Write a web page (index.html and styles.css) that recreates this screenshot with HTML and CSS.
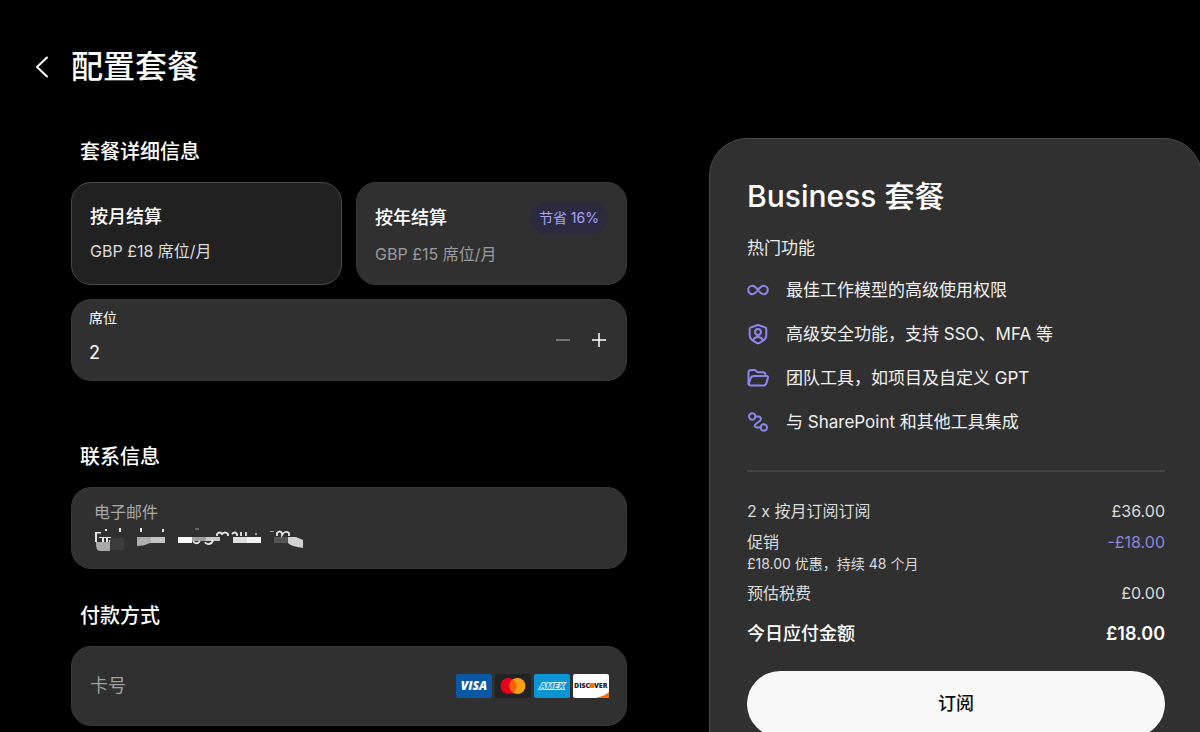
FILE: index.html
```
<!DOCTYPE html>
<html lang="zh-CN">
  <head>
    <meta charset="utf-8">
    <meta name="viewport" content="width=device-width, initial-scale=1">
    <title>配置套餐</title>
    <link rel="stylesheet" href="styles.css">
  </head>
  <body>
    <header class="page-header">
      <button type="button" class="back-btn" aria-label="返回">
        <svg width="14" height="22" viewBox="0 0 14 22"><path d="M12 1.500 2 11l10 9.500"/></svg>
      </button>
      <h1 class="page-title">配置套餐</h1>
    </header>
    <form class="checkout">
      <main class="config">
        <section class="section">
          <h2 class="section-title">套餐详细信息</h2>
          <div class="plans">
            <label class="plan">
              <input type="radio" name="plan" value="monthly" checked>
              <span class="plan-head"><span class="plan-name">按月结算</span></span>
              <span class="plan-price">GBP £18 席位/月</span>
            </label>
            <label class="plan">
              <input type="radio" name="plan" value="yearly">
              <span class="plan-head">
                <span class="plan-name">按年结算</span>
                <span class="badge">节省 16%</span>
              </span>
              <span class="plan-price">GBP £15 席位/月</span>
            </label>
          </div>
          <div class="field seats">
            <div class="seats-value">
              <label for="seats">席位</label>
              <input id="seats" type="text" inputmode="numeric" value="2">
            </div>
            <button type="button" class="step-btn" aria-label="减少席位" disabled>
              <svg width="14" height="14" viewBox="0 0 14 14"><path d="M0 7h14"/></svg>
            </button>
            <button type="button" class="step-btn" aria-label="增加席位">
              <svg width="14" height="14" viewBox="0 0 14 14"><path d="M0 7h14M7 0v14"/></svg>
            </button>
          </div>
        </section>

        <section class="section section-contact">
          <h2 class="section-title">联系信息</h2>
          <div class="field email">
            <label for="email">电子邮件</label>
            <input id="email" type="email">
            <!-- masked address -->
            <svg class="mask" width="210" height="26" viewBox="0 0 210 26" aria-hidden="true">
              <g fill="#e8e8e8">
                <path d="M1 5h2v10H1zM3 5h4v1.500H3z"/>
                <path d="M11 2h2v2h-2zM25 1h2v4h-2zM46 1h2v4h-2zM68 2h2v3h-2z"/>
                <path d="M5 10h12v1H5zM8 11h2v4H8zM12 11h2v4h-2zM15 13h3v2h-3z"/>
                <path d="M161 6h2v2h-2zM176 4h4v1h-4zM101 1.500h4v1h-4z" opacity=".6"/>
              </g>
              <path fill="#a9a9a9" d="M2 15h14v9H6c-3 0-4-2-4-9z"/>
              <path fill="#3b3c3e" d="M16 11h14v12H16z"/>
              <path fill="#aeaeae" d="M43 10h14v6c-4 0-4 3-14 3z"/>
              <path fill="#c5c5c5" d="M57 10h14v6H57z"/>
              <path fill="#fafafa" d="M84 10h14v6H84z"/>
              <path fill="#a0a0a0" d="M98 10h14v4H98z"/>
              <path fill="#c8c8c8" d="M112 10h14v4h-14z"/>
              <path fill="#dedede" d="M139 10h14v6h-14z"/>
              <path fill="#f2f2f2" d="M153 10h14v6h-14z"/>
              <path fill="#555" d="M180 10h14v6h-14z"/>
              <path fill="#d2d2d2" d="M194 10h8l7 3v8c-6-1-12-2-15-5z"/>
              <g fill="none" stroke="#e8e8e8" stroke-width="1.800">
                <path d="M123 9V7q3-3 5 0 3-3 6 0v2M138 7q3-3 5 0v2M147 5v4M152 5v4M183 9V6q3-3 5 0v2q3-5 7-2v3"/>
                <path d="M99 14c2 3 5 3 7 0M111 15c1 3 7 3 8-2"/>
              </g>
            </svg>
          </div>
        </section>

        <section class="section">
          <h2 class="section-title">付款方式</h2>
          <div class="field card-number">
            <input type="text" inputmode="numeric" placeholder="卡号" aria-label="卡号">
            <div class="brands">
              <svg width="36" height="24" viewBox="0 0 36 24" role="img" aria-label="Visa">
                <rect width="36" height="24" rx="2" fill="#0a58a4"/>
                <text x="18" y="16" text-anchor="middle" class="visa">VISA</text>
              </svg>
              <svg width="36" height="24" viewBox="0 0 36 24" role="img" aria-label="Mastercard">
                <rect width="36" height="24" rx="2" fill="#232323"/>
                <circle cx="13.500" cy="12" r="8" fill="#eb001b"/>
                <circle cx="22.500" cy="12" r="8" fill="#f79e1b"/>
                <path d="M18 5.400a8 8 0 0 1 0 13.200 8 8 0 0 1 0-13.200z" fill="#ff5f00"/>
              </svg>
              <svg width="36" height="24" viewBox="0 0 36 24" role="img" aria-label="Amex">
                <rect width="36" height="24" rx="2" fill="#0c95d3"/>
                <text x="18" y="15" text-anchor="middle" class="amex">AMEX</text>
              </svg>
              <svg width="36" height="24" viewBox="0 0 36 24" role="img" aria-label="Discover">
                <rect width="36" height="24" rx="2" fill="#fff"/>
                <path d="M22 24c6-1 11-3 14-6v4a2 2 0 0 1-2 2z" fill="#f76b0c"/>
                <text x="1" y="14" class="discover">DISC</text>
                <text x="21" y="14" class="discover">VER</text>
                <circle cx="19" cy="11.500" r="2.600" fill="#f76b0c"/>
              </svg>
            </div>
          </div>
        </section>
      </main>

      <aside class="summary">
        <h2 class="summary-title">Business 套餐</h2>
        <h3 class="summary-subtitle">热门功能</h3>
        <ul class="features">
          <li>
            <svg class="icon" width="22" height="22" viewBox="0 0 22 22"><path d="M11 11c-2-2.600-3.400-4.200-5.600-4.200a4.200 4.200 0 0 0 0 8.400C7.600 15.200 9 13.600 11 11s3.400-4.200 5.600-4.200a4.200 4.200 0 0 1 0 8.400C14.400 15.200 13 13.600 11 11z"/></svg>
            最佳工作模型的高级使用权限
          </li>
          <li>
            <svg class="icon" width="22" height="22" viewBox="0 0 22 22"><path d="M10 2.200q1-.4 2 0l6 2.200q1.300.5 1.300 1.900v6.200c0 3.500-2.400 5-6.800 7.300q-1.500.8-3 0C5.100 17.500 2.700 16 2.700 12.500V6.300q0-1.400 1.300-1.900z"/><circle cx="11" cy="9" r="2.900"/><path d="M6.500 17c1-4 8-4 9 0"/></svg>
            高级安全功能，支持 SSO、MFA 等
          </li>
          <li>
            <svg class="icon" width="22" height="22" viewBox="0 0 22 22"><path d="M1.500 17V5.500Q1.500 3 4 3h3.200q1 0 1.700.7l.9.900q.6.600 1.600.6h4.500Q18.500 5.200 18.500 8v1"/><path d="M7 9h12.500q2 0 1.400 1.900l-1.500 5.200q-.7 2.400-3 2.400H4q-2.600 0-1.900-2.500l1.500-4.700Q4.300 9 7 9z"/></svg>
            团队工具，如项目及自定义 GPT
          </li>
          <li>
            <svg class="icon" width="22" height="22" viewBox="0 0 22 22"><circle cx="5.200" cy="5.500" r="3.200"/><circle cx="16.800" cy="16.500" r="3.200"/><path d="M8.400 5.500h2.800c3 0 3.500 3 1.600 4.500l-4 3C7 14.500 7.500 16.500 10 16.500h3.600"/></svg>
            与 SharePoint 和其他工具集成
          </li>
        </ul>
        <dl class="bill">
          <div class="bill-row">
            <dt>2 x 按月订阅订阅</dt>
            <dd>£36.00</dd>
          </div>
          <div class="bill-row">
            <dt>促销<small>£18.00 优惠，持续 48 个月</small></dt>
            <dd class="discount">-£18.00</dd>
          </div>
          <div class="bill-row">
            <dt>预估税费</dt>
            <dd>£0.00</dd>
          </div>
          <div class="bill-row total">
            <dt>今日应付金额</dt>
            <dd>£18.00</dd>
          </div>
        </dl>
        <button type="submit" class="subscribe-btn">订阅</button>
      </aside>
    </form>
  </body>
</html>
```
FILE: styles.css
```
* {
  box-sizing: border-box;
}
body {
  margin: 0;
  height: 100vh;
  overflow: hidden;
  background: #000;
  color: #fff;
  font-family: Inter, "Noto Sans CJK SC", sans-serif;
  font-size: 16px;
  line-height: 24px;
}
h1, h2, h3, ul, dl, dd {
  margin: 0;
  padding: 0;
}
button, input {
  font: inherit;
  color: inherit;
  background: none;
  border: 0;
  padding: 0;
}
button {
  cursor: pointer;
}
svg {
  display: block;
}

/* Header */
.page-header {
  display: flex;
  align-items: center;
  gap: 22px;
  padding: 46px 35px 50px;
}
.back-btn path {
  fill: none;
  stroke: #fff;
  stroke-width: 2;
  stroke-linecap: round;
  stroke-linejoin: round;
}
.page-title {
  font-size: 32px;
  line-height: 42px;
  font-weight: 500;
}

/* Two columns, the summary runs just past the right edge */
.checkout {
  display: grid;
  grid-template-columns: 556fr 493fr;
  gap: 82px;
  align-items: start;
  margin: -1px -2px 0 71px;
}
.section {
  margin-bottom: 32px;
}
.section-title {
  padding-left: 9px;
  margin-bottom: 15px;
  font-size: 20px;
  line-height: 30px;
  font-weight: 500;
}
.section-contact {
  margin-top: 61px;
}

/* Plans */
.plans {
  display: grid;
  grid-template-columns: 1fr 1fr;
  gap: 14px;
  margin-bottom: 14px;
}
.plan {
  position: relative;
  display: flex;
  flex-direction: column;
  justify-content: center;
  gap: 8px;
  min-height: 103px;
  padding: 0 18px;
  border: 1px solid #383838;
  border-radius: 20px;
  background: #303030;
  cursor: pointer;
}
.plan:has(input:checked) {
  background: #212121;
  border-color: #4a4a4a;
  gap: 10px;
}
.plan input {
  position: absolute;
  opacity: 0;
}
.plan-head {
  display: flex;
  align-items: center;
  justify-content: space-between;
}
.plan-name {
  font-size: 18px;
  font-weight: 500;
}
.plan-price {
  color: #9b9b9b;
}
.plan input:checked ~ .plan-price {
  color: #dcdcdc;
}
.badge {
  padding: 0 9px;
  border-radius: 16px;
  background: #2d2a40;
  color: #a5a5fa;
  font-size: 14px;
  line-height: 32px;
}

/* Fields */
.field {
  border: 1px solid #383838;
  border-radius: 20px;
  background: #303030;
}
.field input {
  display: block;
  width: 100%;
  outline: 0;
}
.seats {
  display: flex;
  align-items: center;
  padding: 8px 9px 15px 17px;
}
.seats-value {
  flex: 1;
}
.seats-value label {
  display: block;
  margin-bottom: 13px;
  font-size: 14px;
  line-height: 20px;
}
.seats-value input {
  height: 24px;
  font-size: 18px;
}
.step-btn {
  display: grid;
  place-items: center;
  width: 36px;
  height: 36px;
  margin-top: 7px;
}
.step-btn path {
  stroke: #fff;
  stroke-width: 1.5;
}
.step-btn:disabled path {
  stroke: #8a8a8a;
}
.email {
  position: relative;
  min-height: 82px;
  padding: 12px 22px 16px;
}
.email label {
  display: block;
  color: #a8a8a8;
}
.email input {
  height: 26px;
}
.mask {
  position: absolute;
  left: 22px;
  top: 39px;
}
.card-number {
  display: flex;
  align-items: center;
  min-height: 80px;
  padding: 0 17px 0 18px;
}
.card-number input {
  flex: 1;
  min-width: 0;
  font-size: 18px;
}
.card-number input::placeholder {
  color: #a0a0a0;
}
.brands {
  display: flex;
  gap: 3px;
}
.visa {
  fill: #fff;
  font: italic 800 12px "Open Sans", sans-serif;
}
.amex {
  fill: #0c95d3;
  stroke: #d5edf8;
  stroke-width: 2;
  paint-order: stroke;
  font: italic 700 9px "Open Sans", sans-serif;
}
.discover {
  fill: #222;
  font: 800 7px "Open Sans", sans-serif;
}

/* Summary */
.summary {
  margin-top: 1px;
  padding: 37px 36px 36px 37px;
  border: 1px solid #4a4a4a;
  border-radius: 38px;
  background: #303030;
}
.summary-title {
  margin-bottom: 20px;
  font-size: 30px;
  line-height: 40px;
  font-weight: 500;
}
.summary-subtitle {
  margin-bottom: 18px;
  color: #ececec;
  font-size: 17px;
  font-weight: 400;
}
.features {
  display: grid;
  gap: 20px;
  padding-bottom: 36px;
  border-bottom: 2px solid #414141;
  color: #f0f0f0;
  font-size: 17px;
  list-style: none;
}
.features li {
  display: flex;
  align-items: center;
  gap: 17px;
}
.icon {
  fill: none;
  stroke: #8c87f0;
  stroke-width: 2;
  stroke-linecap: round;
  stroke-linejoin: round;
}
.bill {
  display: grid;
  gap: 7px;
  padding: 27px 0 25px;
  color: #dcdcdc;
}
.bill-row {
  display: flex;
  justify-content: space-between;
}
.bill small {
  display: block;
  font-size: 14px;
  line-height: 20px;
}
.discount {
  color: #8a86dc;
}
.total {
  margin-top: 10px;
  color: #fff;
  font-size: 18px;
  font-weight: 500;
}
.total dd {
  font-weight: 600;
}
.subscribe-btn {
  display: block;
  width: 100%;
  height: 66px;
  border-radius: 33px;
  background: #f9f9f9;
  color: #0d0d0d;
  font-size: 18px;
  font-weight: 500;
}
```
